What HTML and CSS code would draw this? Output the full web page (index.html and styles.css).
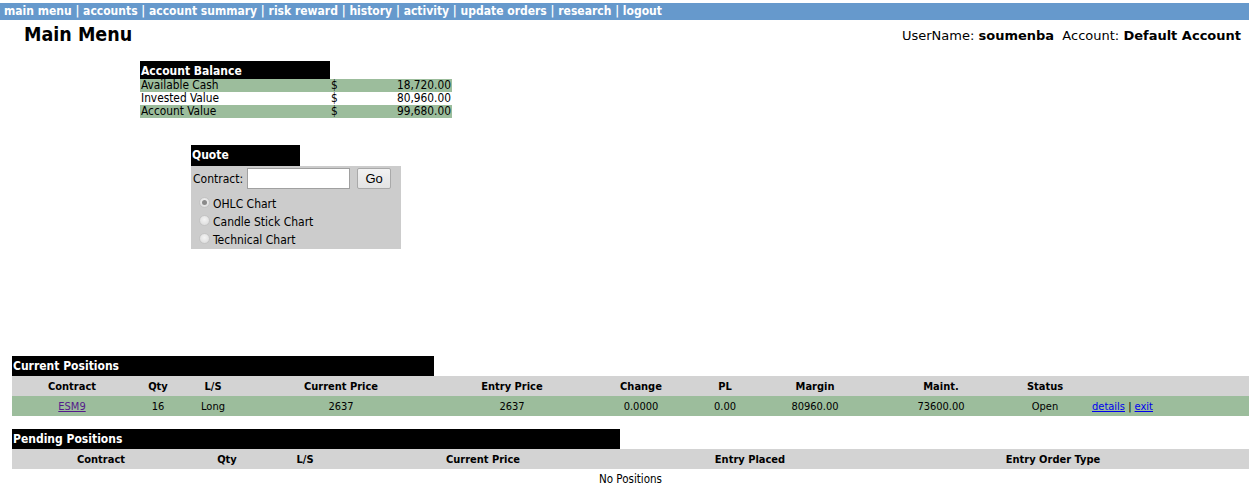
FILE: index.html
```html
<!DOCTYPE html>
<html>
<head>
<meta charset="utf-8">
<title>Main Menu</title>
<link rel="stylesheet" href="styles.css">
</head>
<body>
<div class="topnav">
  <a href="#">main menu</a> | <a href="#">accounts</a> | <a href="#">account summary</a> | <a href="#">risk reward</a> | <a href="#">history</a> | <a href="#">activity</a> | <a href="#">update orders</a> | <a href="#">research</a> | <a href="#">logout</a>
</div>

<div class="titlebar">
  <h1 class="pagetitle">Main Menu</h1>
  <div class="userinfo">UserName: <b>soumenba</b>&nbsp; Account: <b>Default Account</b></div>
</div>

<div class="balance">
  <div class="blackhead bal-head">Account Balance</div>
  <table class="baltable">
    <tr class="green"><td class="lbl">Available Cash</td><td class="cur">$</td><td class="amt">18,720.00</td></tr>
    <tr><td class="lbl">Invested Value</td><td class="cur">$</td><td class="amt">80,960.00</td></tr>
    <tr class="green"><td class="lbl">Account Value</td><td class="cur">$</td><td class="amt">99,680.00</td></tr>
  </table>
</div>

<div class="quote">
  <div class="blackhead quote-head">Quote</div>
  <div class="quote-box">
    <div class="quote-row">
      <label class="qlabel">Contract:</label>
      <input class="qinput" type="text">
      <button class="qgo">Go</button>
    </div>
    <div class="radio-row"><span class="radio checked"></span>OHLC Chart</div>
    <div class="radio-row"><span class="radio"></span>Candle Stick Chart</div>
    <div class="radio-row"><span class="radio"></span>Technical Chart</div>
  </div>
</div>

<div class="section current">
  <div class="blackhead cur-head">Current Positions</div>
  <table class="grid">
    <colgroup>
      <col style="width:120px"><col style="width:52px"><col style="width:58px"><col style="width:198px"><col style="width:144px"><col style="width:114px"><col style="width:54px"><col style="width:126px"><col style="width:126px"><col style="width:82px"><col>
    </colgroup>
    <tr class="headrow">
      <th>Contract</th><th>Qty</th><th>L/S</th><th>Current Price</th><th>Entry Price</th><th>Change</th><th>PL</th><th>Margin</th><th>Maint.</th><th>Status</th><th></th>
    </tr>
    <tr class="green datarow">
      <td><a class="visited" href="#">ESM9</a></td><td>16</td><td>Long</td><td>2637</td><td>2637</td><td>0.0000</td><td>0.00</td><td>80960.00</td><td>73600.00</td><td>Open</td><td class="links"><a href="#">details</a> | <a href="#">exit</a></td>
    </tr>
  </table>
</div>

<div class="section pending">
  <div class="blackhead pend-head">Pending Positions</div>
  <table class="grid">
    <colgroup>
      <col style="width:178px"><col style="width:74px"><col style="width:82px"><col style="width:274px"><col style="width:260px"><col style="width:346px"><col>
    </colgroup>
    <tr class="headrow">
      <th>Contract</th><th>Qty</th><th>L/S</th><th>Current Price</th><th>Entry Placed</th><th>Entry Order Type</th><th></th>
    </tr>
    <tr class="emptyrow"><td colspan="7">No Positions</td></tr>
  </table>
</div>
</body>
</html>
```

FILE: styles.css
```css
body {
  margin: 0;
  font-family: "DejaVu Sans Condensed", "DejaVu Sans", sans-serif;
  font-size: 11px;
  color: #000;
  background: #fff;
}

.topnav {
  margin-top: 3px;
  height: 17px;
  line-height: 17px;
  background: #6699cc;
  color: #fff;
  font-weight: bold;
  font-size: 12px;
  padding-left: 4px;
  white-space: nowrap;
}
.topnav a { color: #fff; text-decoration: none; }

.titlebar {
  display: flex;
  justify-content: space-between;
  align-items: flex-end;
  padding: 5px 8px 0 24px;
  height: 20px;
}
.pagetitle {
  margin: 0;
  font-size: 19.5px;
  font-weight: bold;
  line-height: 20px;
}
.userinfo {
  font-family: "DejaVu Sans", sans-serif;
  font-size: 13px;
  line-height: 18px;
}

.blackhead {
  background: #000;
  color: #fff;
  font-weight: bold;
  font-size: 12px;
  height: 18px;
  line-height: 20px;
  padding-left: 1px;
}

.green { background: #9cbd9c; }

.balance {
  margin: 16px 0 0 140px;
  width: 312px;
}
.bal-head { width: 189px; }
.baltable {
  border-collapse: collapse;
  width: 312px;
}
.baltable td {
  padding: 0 1px;
  height: 13px;
  line-height: 13px;
  font-size: 11.8px;
}
.baltable .lbl { width: 188px; }
.baltable .cur { width: 40px; }
.baltable .amt { text-align: right; }

.quote {
  margin: 27px 0 0 191px;
  width: 210px;
}
.quote-head { width: 108px; height: 21px; line-height: 21px; }
.quote-box {
  background: #cccccc;
  height: 83px;
  padding: 2px 0 0 2px;
  box-sizing: border-box;
}
.quote-row {
  display: flex;
  align-items: center;
  height: 21px;
}
.qlabel { font-size: 12px; }
.qinput {
  margin: 0 0 0 4px;
  width: 103px;
  height: 21px;
  box-sizing: border-box;
  border: 1px solid #a0a0a0;
  background: #fff;
  padding: 0;
}
.qgo {
  margin-left: 7px;
  width: 34px;
  height: 21px;
  box-sizing: border-box;
  border: 1px solid #a9a9a9;
  border-radius: 2px;
  background: linear-gradient(#f2f2f2, #e3e3e3);
  font-family: "Liberation Sans", sans-serif;
  font-size: 13px;
  padding: 0;
}
.radio-row {
  display: flex;
  align-items: center;
  font-size: 12px;
  height: 18px;
  padding-left: 6px;
}
.quote-row + .radio-row { margin-top: 6px; }
.radio {
  width: 11px;
  height: 11px;
  border-radius: 50%;
  background: radial-gradient(circle at 50% 40%, #f4f4f4, #d8d8d8);
  border: 1px solid #c4c4c4;
  box-sizing: border-box;
  margin: -4px 3px 0 0;
  position: relative;
}
.radio.checked::after {
  content: "";
  position: absolute;
  left: 2px;
  top: 2px;
  width: 5px;
  height: 5px;
  border-radius: 50%;
  background: #8a8a8a;
}

.section { margin-left: 12px; }
.current { margin-top: 107px; }
.pending { margin-top: 13px; }
.cur-head { width: 421px; height: 20px; }
.pend-head { width: 607px; height: 20px; }

.grid {
  border-collapse: collapse;
  width: 1237px;
  table-layout: fixed;
}
.grid th, .grid td {
  padding: 0;
  text-align: center;
  font-size: 11px;
  height: 20px;
  white-space: nowrap;
}
.headrow { background: #d3d3d3; }
.grid th { font-weight: bold; }
.grid td.links { text-align: left; padding-left: 6px; }
.grid a { color: #0000ee; }
.grid a.visited { color: #551a8b; }
.emptyrow td { height: 20px; font-size: 11.5px; }
```
